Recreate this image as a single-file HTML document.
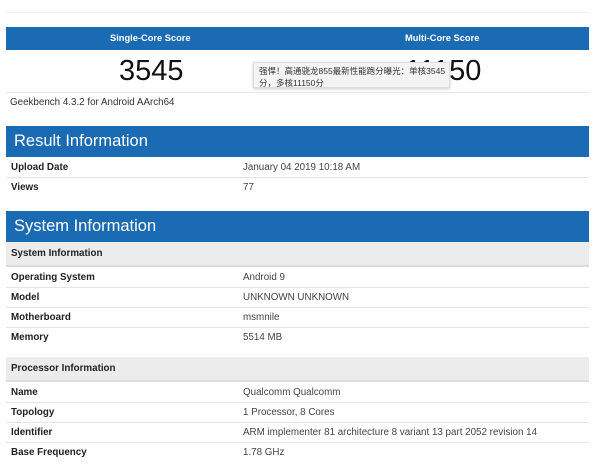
<!DOCTYPE html>
<html><head><meta charset="utf-8"><style>
body{margin:0;width:600px;height:474px;background:#fff;position:relative;overflow:hidden;font-family:"Liberation Sans","Noto Sans CJK SC",sans-serif;color:#222}
.a{position:absolute}
.blue{background:#1a6bb3;color:#fff;left:6px;width:583px}
.row{position:absolute;left:6px;width:583px;height:20px;border-bottom:1px solid #e4e4e4;font-size:9.8px;line-height:21px}
.row b{position:absolute;left:5px;font-weight:bold;color:#222}
.row span{position:absolute;left:237px;color:#444}
.sub{position:absolute;left:6px;width:583px;background:#ececec;font-size:9.8px;font-weight:bold;padding-left:5px;box-sizing:border-box;border-bottom:2px solid #ddd}
.h{font-size:16.5px;padding-left:8px;box-sizing:border-box}
</style></head><body>
<div class="a" style="left:6px;top:12px;width:583px;border-top:1px solid #eee"></div>
<div class="a blue" style="top:27px;height:23px;font-size:9.3px;font-weight:bold;line-height:23px">
<span class="a" style="left:104px">Single-Core Score</span><span class="a" style="left:399px">Multi-Core Score</span></div>
<div class="a" style="left:119px;top:55px;font-size:29px;color:#111">3545</div>
<div class="a" style="left:405px;top:55px;font-size:29px;color:#111">11150</div>
<div class="a" style="left:6px;top:92px;width:583px;border-top:1px solid #e8e8e8"></div>
<div class="a" style="left:10px;top:97px;font-size:9.8px;color:#333">Geekbench 4.3.2 for Android AArch64</div>
<div class="a" style="left:253px;top:62px;width:197px;height:26px;background:#f4f4f4;border:1px solid #ddd;box-shadow:0 1px 3px rgba(0,0,0,.2);font-size:8.5px;line-height:12px;padding:2px 0 0 5px;box-sizing:border-box;color:#333">强悍！高通骁龙855最新性能跑分曝光：单核3545分，多核11150分</div>
<div class="a blue h" style="top:126px;height:31px;line-height:31px">Result Information</div>
<div class="row" style="top:157px"><b>Upload Date</b><span>January 04 2019 10:18 AM</span></div>
<div class="row" style="top:177px;border:0"><b>Views</b><span>77</span></div>
<div class="a blue h" style="top:211px;height:31px;line-height:31px">System Information</div>
<div class="sub" style="top:242px;height:25px;line-height:24px">System Information</div>
<div class="row" style="top:267px"><b>Operating System</b><span>Android 9</span></div>
<div class="row" style="top:287px"><b>Model</b><span>UNKNOWN UNKNOWN</span></div>
<div class="row" style="top:307px"><b>Motherboard</b><span>msmnile</span></div>
<div class="row" style="top:327px;border:0"><b>Memory</b><span>5514 MB</span></div>
<div class="sub" style="top:357px;height:25px;line-height:24px">Processor Information</div>
<div class="row" style="top:382px"><b>Name</b><span>Qualcomm Qualcomm</span></div>
<div class="row" style="top:402px"><b>Topology</b><span>1 Processor, 8 Cores</span></div>
<div class="row" style="top:422px"><b>Identifier</b><span>ARM implementer 81 architecture 8 variant 13 part 2052 revision 14</span></div>
<div class="row" style="top:442px;border:0"><b>Base Frequency</b><span>1.78 GHz</span></div>
</body></html>
